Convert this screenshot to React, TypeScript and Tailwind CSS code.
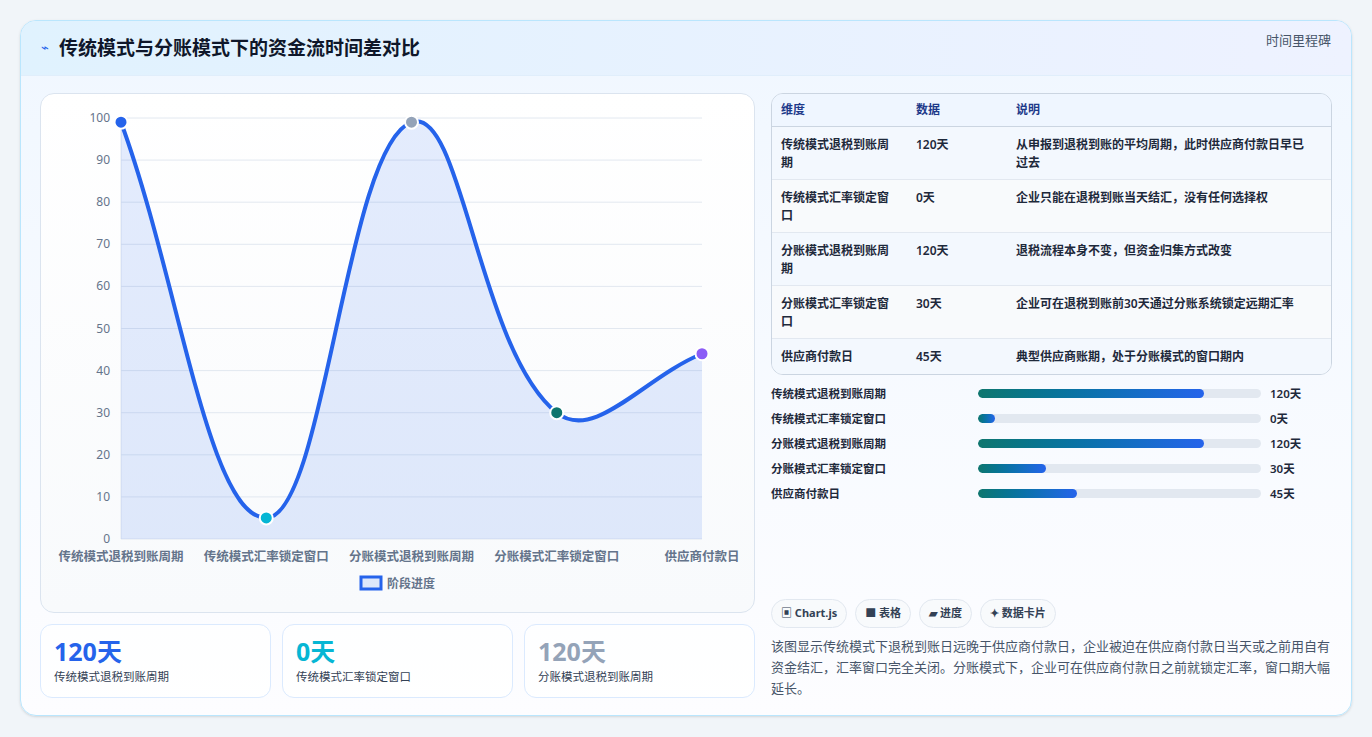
import React from "react";

const F = { fontFamily: '"Noto Sans","Noto Sans CJK SC",sans-serif' };
const labels = ["传统模式退税到账周期", "传统模式汇率锁定窗口", "分账模式退税到账周期", "分账模式汇率锁定窗口", "供应商付款日"];
const vals = [99, 5, 99, 30, 44];
const colors = ["#2563eb", "#06b6d4", "#94a3b8", "#0f766e", "#8b5cf6"];

function Chart() {
  const x0 = 80, x1 = 661, yb = 445, ph = 421;
  const pts = vals.map((v, i) => ({ x: x0 + (i * (x1 - x0)) / 4, y: yb - (v / 100) * ph }));
  const t = 0.4;
  const cps = pts.map((p, i) => {
    const pr = pts[i - 1] || p, nx = pts[i + 1] || p;
    const d01 = Math.hypot(p.x - pr.x, p.y - pr.y), d12 = Math.hypot(nx.x - p.x, nx.y - p.y);
    const s01 = d01 / (d01 + d12 || 1), s12 = d12 / (d01 + d12 || 1);
    return {
      px: p.x - t * s01 * (nx.x - pr.x), py: p.y - t * s01 * (nx.y - pr.y),
      nx: p.x + t * s12 * (nx.x - pr.x), ny: p.y + t * s12 * (nx.y - pr.y),
    };
  });
  let d = `M${pts[0].x},${pts[0].y}`;
  for (let i = 1; i < pts.length; i++) d += ` C${cps[i - 1].nx},${cps[i - 1].ny} ${cps[i].px},${cps[i].py} ${pts[i].x},${pts[i].y}`;
  const area = d + ` L${x1},${yb} L${x0},${yb} Z`;
  return (
    <svg width="715" height="500" className="block">
      {Array.from({ length: 11 }).map((_, i) => {
        const y = yb - i * ph / 10;
        return (
          <g key={i}>
            <line x1={x0} x2={x1} y1={y} y2={y} stroke="#e2e8f0" />
            <text x={x0 - 11} y={y + 4} textAnchor="end" fontSize="12" fill="#64748b" style={F}>{i * 10}</text>
          </g>
        );
      })}
      <line x1={x0} x2={x0} y1={yb - ph} y2={yb} stroke="#e2e8f0" />
      <path d={area} fill="#2563eb" fillOpacity="0.12" />
      <path d={d} fill="none" stroke="#2563eb" strokeWidth="4" />
      {pts.map((p, i) => (
        <circle key={i} cx={p.x} cy={p.y} r="6.5" fill={colors[i]} stroke="#fff" strokeWidth="2" />
      ))}
      {pts.map((p, i) => (
        <text key={i} x={p.x} y={yb + 22} textAnchor="middle" fontSize="12.5" fontWeight="700" fill="#64748b" style={F}>{labels[i]}</text>
      ))}
      <rect x={320} y={483} width="20" height="12" fill="#2563eb" fillOpacity="0.12" stroke="#2563eb" strokeWidth="3" />
      <text x={346} y={494} fontSize="12" fontWeight="700" fill="#64748b" style={F}>阶段进度</text>
    </svg>
  );
}

const rows = [
  ["传统模式退税到账周期", "120天", "从申报到退税到账的平均周期，此时供应商付款日早已过去"],
  ["传统模式汇率锁定窗口", "0天", "企业只能在退税到账当天结汇，没有任何选择权"],
  ["分账模式退税到账周期", "120天", "退税流程本身不变，但资金归集方式改变"],
  ["分账模式汇率锁定窗口", "30天", "企业可在退税到账前30天通过分账系统锁定远期汇率"],
  ["供应商付款日", "45天", "典型供应商账期，处于分账模式的窗口期内"],
];
const bars = [["传统模式退税到账周期", 80, "120天"], ["传统模式汇率锁定窗口", 6, "0天"], ["分账模式退税到账周期", 80, "120天"], ["分账模式汇率锁定窗口", 24, "30天"], ["供应商付款日", 35, "45天"]] as const;

export default function App() {
  return (
    <div className="w-[1372px] h-[737px] bg-[#f1f5f9] pt-[20px] pl-[20px]" style={F}>
      <div className="w-[1332px] h-[696px] rounded-[16px] border border-[#bae6fd] bg-gradient-to-b from-[#f0f7ff] to-[#fdfdff] overflow-hidden shadow-sm">
        <div className="h-[55px] flex items-center justify-between px-[20px] bg-gradient-to-r from-[#e0f2fe] to-[#eef2ff] border-b border-[#e0eefb]">
          <div className="flex items-center gap-[10px]">
            <span className="text-[#2563eb] text-[13px]">⌁</span>
            <span className="text-[19px] font-bold text-[#0f172a]">传统模式与分账模式下的资金流时间差对比</span>
          </div>
          <span className="text-[13px] text-[#475569] -mt-[14px]">时间里程碑</span>
        </div>
        <div className="flex gap-[16px] px-[19px] pt-[17px]">
          <div className="w-[715px] flex flex-col gap-[11px]">
            <div className="h-[520px] rounded-[14px] border border-[#dbe4ef] bg-gradient-to-b from-white to-[#f8fafc] pt-0">
              <Chart />
            </div>
            <div className="flex gap-[11px]">
              {[["120天", "#2563eb", "传统模式退税到账周期"], ["0天", "#06b6d4", "传统模式汇率锁定窗口"], ["120天", "#94a3b8", "分账模式退税到账周期"]].map(([n, c, l]) => (
                <div key={l} className="flex-1 h-[74px] rounded-[12px] border border-[#dbeafe] bg-white/70 px-[13px] pt-[10px]">
                  <div className="text-[25px] font-bold leading-[32px]" style={{ color: c }}>{n}</div>
                  <div className="text-[11.5px] text-[#334155] mt-[1px]">{l}</div>
                </div>
              ))}
            </div>
          </div>
          <div className="w-[562px] flex flex-col">
            <div className="rounded-[12px] border border-[#cbd5e1] overflow-hidden text-[12px] text-[#1e293b]">
              <div className="flex h-[33px] items-center bg-[#eff6ff] border-b border-[#cbd5e1] font-bold text-[#1e3a8a]">
                <div className="w-[144px] pl-[9px]">维度</div><div className="w-[100px]">数据</div><div className="flex-1">说明</div>
              </div>
              {rows.map((r, i) => (
                <div key={i} className={`flex ${i < 4 ? "h-[53px] border-b border-[#e2e8f0]" : "h-[35px]"} pt-[9px] leading-[18px] font-semibold ${i % 2 ? "bg-[#f8fafc]" : "bg-[#f3f8fe]"}`}>
                  <div className="w-[144px] pl-[9px] pr-[20px]">{r[0]}</div><div className="w-[100px]">{r[1]}</div><div className="flex-1 pr-[26px]">{r[2]}</div>
                </div>
              ))}
            </div>
            <div className="mt-[9px] flex flex-col gap-[6px]">
              {bars.map(([l, p, v]) => (
                <div key={l} className="flex items-center h-[19px] text-[11.5px] font-semibold text-[#1e293b]">
                  <div className="w-[207px]">{l}</div>
                  <div className="w-[283px] h-[9px] rounded-full bg-[#e2e8f0] overflow-hidden">
                    <div className="h-full rounded-full bg-gradient-to-r from-[#0f766e] to-[#2563eb]" style={{ width: `${p}%` }} />
                  </div>
                  <div className="ml-[9px]">{v}</div>
                </div>
              ))}
            </div>
            <div className="mt-[96px] flex gap-[8px]">
              {["▣ Chart.js", "■ 表格", "▰ 进度", "✦ 数据卡片"].map(c => (
                <span key={c} className="h-[29px] px-[9px] flex items-center rounded-full border border-[#e2e8f0] bg-[#f8fafc] text-[11px] font-bold text-[#334155]">{c}</span>
              ))}
            </div>
            <p className="mt-[8px] text-[13px] leading-[21px] text-[#475569]">该图显示传统模式下退税到账日远晚于供应商付款日，企业被迫在供应商付款日当天或之前用自有资金结汇，汇率窗口完全关闭。分账模式下，企业可在供应商付款日之前就锁定汇率，窗口期大幅延长。</p>
          </div>
        </div>
      </div>
    </div>
  );
}
